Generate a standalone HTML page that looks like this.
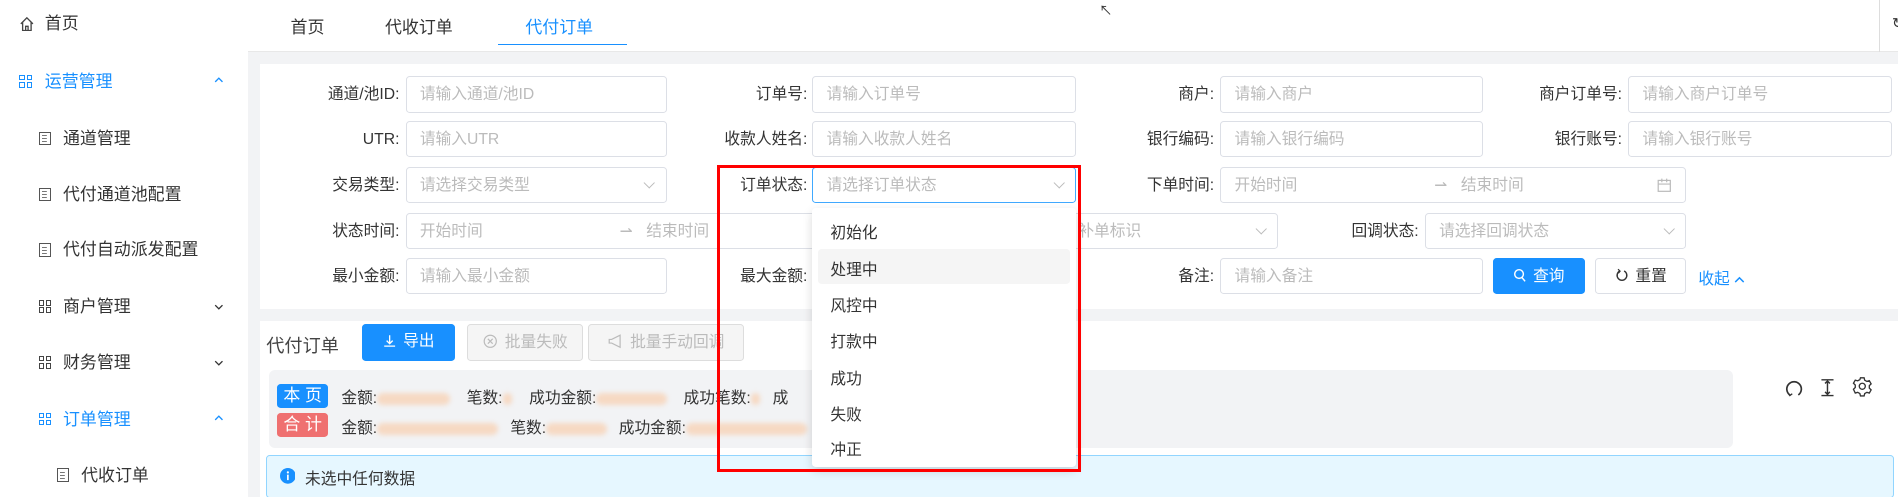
<!DOCTYPE html>
<html><head><meta charset="utf-8"><style>
*{box-sizing:border-box;margin:0;padding:0}
html,body{width:1898px;height:497px;overflow:hidden;background:#fff}
#w{zoom:1.2105;position:relative;width:1568px;height:411px;font-family:"Liberation Sans","Noto Sans CJK SC",sans-serif;font-size:13px;color:#333;overflow:hidden}
.a{position:absolute;white-space:nowrap}
.side{left:0;top:0;width:205px;height:411px;background:#fff}
.si{position:absolute;font-size:14px;color:#333;line-height:20px}
.blue{color:#1890ff}
.ico{display:inline-block;width:10px;height:11px;border:1.3px solid #555;position:absolute;background:linear-gradient(#777,#777) 2px 2px/4px 1px no-repeat,linear-gradient(#777,#777) 2px 4.5px/4px 1px no-repeat,linear-gradient(#777,#777) 2px 7px/4px 1px no-repeat}
.grid{position:absolute;width:11px;height:11px}
.grid i{position:absolute;width:4.5px;height:4.5px;border:1.2px solid currentColor}
.lbl{position:absolute;text-align:right;width:120px;line-height:32px;color:#333}
.inp{position:absolute;height:30px;border:1px solid #dcdfe6;border-radius:3px;background:#fff;color:#bbb;line-height:30px;padding-left:11px}
.chev{position:absolute;right:10px;top:9px;width:7px;height:7px;border-right:1px solid #bbb;border-bottom:1px solid #bbb;transform:rotate(45deg)}
.btn{position:absolute;height:30px;border-radius:3px;line-height:29px;text-align:center}
.blur{display:inline-block;height:10px;background:#f6d9c3;border-radius:5px;filter:blur(2px);vertical-align:middle}
.dd{position:absolute;font-size:13px;color:#333;left:686px}
</style></head><body><div id="w">
<div class="a" style="left:205px;top:0;width:1363px;height:411px;background:#f2f3f5"></div>
<div class="a" style="left:205px;top:0;width:1363px;height:43px;background:#fff;border-bottom:1px solid #e8e8e8"></div>
<div class="a" style="left:240px;top:11px;font-size:14px">首页</div>
<div class="a" style="left:318px;top:11px;font-size:14px">代收订单</div>
<div class="a blue" style="left:434px;top:11px;font-size:14px">代付订单</div>
<div class="a" style="left:411px;top:36px;width:107px;height:1.5px;background:#1890ff"></div>
<div class="a" style="left:908px;top:0;font-size:11px;color:#333">↖</div>
<div class="a" style="left:1552px;top:0;width:1px;height:43px;background:#ddd"></div>
<div class="a" style="left:1563px;top:13px;font-size:12px;color:#333">↻</div>

<div class="a side"></div>
<svg class="a" style="left:16px;top:13px" width="13" height="13" viewBox="0 0 13 13"><path d="M1.5 6.5L6.5 1.5L11.5 6.5M3 5v7h7V5M5.5 12V8.5h2V12" fill="none" stroke="#444" stroke-width="1.1"/></svg>
<div class="si" style="left:37px;top:10px">首页</div>
<div class="grid blue" style="left:16px;top:62px"><i style="left:0;top:0"></i><i style="left:6px;top:0"></i><i style="left:0;top:6px"></i><i style="left:6px;top:6px"></i></div>
<div class="si blue" style="left:37px;top:58px">运营管理</div>
<svg class="a" style="left:177px;top:64px" width="8" height="5"><path d="M1 4L4 1L7 4" fill="none" stroke="#1890ff" stroke-width="1.1"/></svg>
<div class="ico" style="left:32px;top:109px"></div><div class="si" style="left:52px;top:105px">通道管理</div>
<div class="ico" style="left:32px;top:155px"></div><div class="si" style="left:52px;top:151px">代付通道池配置</div>
<div class="ico" style="left:32px;top:201px"></div><div class="si" style="left:52px;top:197px">代付自动派发配置</div>
<div class="grid" style="left:32px;top:248px;color:#444"><i style="left:0;top:0"></i><i style="left:6px;top:0"></i><i style="left:0;top:6px"></i><i style="left:6px;top:6px"></i></div>
<div class="si" style="left:52px;top:244px">商户管理</div>
<svg class="a" style="left:177px;top:251px" width="8" height="5"><path d="M1 1L4 4L7 1" fill="none" stroke="#333" stroke-width="1.1"/></svg>
<div class="grid" style="left:32px;top:294px;color:#444"><i style="left:0;top:0"></i><i style="left:6px;top:0"></i><i style="left:0;top:6px"></i><i style="left:6px;top:6px"></i></div>
<div class="si" style="left:52px;top:290px">财务管理</div>
<svg class="a" style="left:177px;top:297px" width="8" height="5"><path d="M1 1L4 4L7 1" fill="none" stroke="#333" stroke-width="1.1"/></svg>
<div class="grid blue" style="left:32px;top:341px"><i style="left:0;top:0"></i><i style="left:6px;top:0"></i><i style="left:0;top:6px"></i><i style="left:6px;top:6px"></i></div>
<div class="si blue" style="left:52px;top:337px">订单管理</div>
<svg class="a" style="left:177px;top:343px" width="8" height="5"><path d="M1 4L4 1L7 4" fill="none" stroke="#1890ff" stroke-width="1.1"/></svg>
<div class="ico" style="left:47px;top:387px"></div><div class="si" style="left:67px;top:383px">代收订单</div>

<!-- filter panel -->
<div class="a" style="left:215px;top:53px;width:1353px;height:202px;background:#fff"></div>
<div class="lbl" style="left:210px;top:63px">通道/池ID:</div><div class="inp" style="left:335px;top:63px;width:216px">请输入通道/池ID</div>
<div class="lbl" style="left:547px;top:63px">订单号:</div><div class="inp" style="left:671px;top:63px;width:218px">请输入订单号</div>
<div class="lbl" style="left:883px;top:63px">商户:</div><div class="inp" style="left:1008px;top:63px;width:217px">请输入商户</div>
<div class="lbl" style="left:1220px;top:63px">商户订单号:</div><div class="inp" style="left:1345px;top:63px;width:218px">请输入商户订单号</div>

<div class="lbl" style="left:210px;top:100px">UTR:</div><div class="inp" style="left:335px;top:100px;width:216px">请输入UTR</div>
<div class="lbl" style="left:547px;top:100px">收款人姓名:</div><div class="inp" style="left:671px;top:100px;width:218px">请输入收款人姓名</div>
<div class="lbl" style="left:883px;top:100px">银行编码:</div><div class="inp" style="left:1008px;top:100px;width:217px">请输入银行编码</div>
<div class="lbl" style="left:1220px;top:100px">银行账号:</div><div class="inp" style="left:1345px;top:100px;width:218px">请输入银行账号</div>

<div class="lbl" style="left:210px;top:138px">交易类型:</div><div class="inp" style="left:335px;top:138px;width:216px">请选择交易类型<span class="chev"></span></div>
<div class="lbl" style="left:547px;top:138px">订单状态:</div><div class="inp" style="left:671px;top:138px;width:218px;border-color:#40a9ff">请选择订单状态<span class="chev"></span></div>
<div class="lbl" style="left:883px;top:138px">下单时间:</div><div class="inp" style="left:1008px;top:138px;width:385px">开始时间<span class="a" style="left:176px;top:0">⇀</span><span class="a" style="left:198px;top:0">结束时间</span>
<svg class="a" style="left:360px;top:8px" width="12" height="12"><rect x="1" y="2" width="10" height="9" fill="none" stroke="#bbb"/><path d="M1 5h10M4 0.5v3M8 0.5v3" stroke="#bbb"/></svg></div>

<div class="lbl" style="left:210px;top:176px">状态时间:</div><div class="inp" style="left:335px;top:176px;width:385px">开始时间<span class="a" style="left:176px;top:0">⇀</span><span class="a" style="left:198px;top:0">结束时间</span></div>
<div class="inp" style="left:840px;top:176px;width:216px;padding-left:50px">补单标识<span class="chev"></span></div>
<div class="lbl" style="left:1052px;top:176px">回调状态:</div><div class="inp" style="left:1177px;top:176px;width:216px">请选择回调状态<span class="chev"></span></div>

<div class="lbl" style="left:210px;top:213px">最小金额:</div><div class="inp" style="left:335px;top:213px;width:216px">请输入最小金额</div>
<div class="lbl" style="left:547px;top:213px">最大金额:</div>
<div class="lbl" style="left:883px;top:213px">备注:</div><div class="inp" style="left:1008px;top:213px;width:217px">请输入备注</div>
<div class="btn" style="left:1233px;top:213px;width:76px;background:#1890ff;color:#fff;border:1px solid #1890ff"><svg width="11" height="12" style="vertical-align:-1px;margin-right:6px"><circle cx="5" cy="5" r="3.6" fill="none" stroke="#fff" stroke-width="1.2"/><path d="M7.5 8L10 11" stroke="#fff" stroke-width="1.2"/></svg>查询</div>
<div class="btn" style="left:1318px;top:213px;width:75px;border:1px solid #dcdfe6;color:#333"><svg width="11" height="12" style="vertical-align:-1px;margin-right:6px"><path d="M4 2.5A4 4 0 1 0 7.5 2.5" fill="none" stroke="#333" stroke-width="1.2"/><path d="M2.5 1L4.2 2.6L2.8 4.3" fill="none" stroke="#333" stroke-width="1"/></svg>重置</div>
<div class="a blue" style="left:1403px;top:220px">收起 <svg width="9" height="6" style="vertical-align:1px"><path d="M1 5L4.5 1.5L8 5" fill="none" stroke="#1890ff" stroke-width="1.2"/></svg></div>

<!-- table panel -->
<div class="a" style="left:215px;top:265px;width:1353px;height:146px;background:#fff"></div>
<div class="a" style="left:220px;top:274px;font-size:15px;color:#444">代付订单</div>
<div class="btn" style="left:299px;top:268px;width:77px;background:#1890ff;color:#fff"><svg width="11" height="11" style="vertical-align:-1px;margin-right:6px"><path d="M5.5 1v7M3 5.5L5.5 8L8 5.5M1 10h9" fill="none" stroke="#fff" stroke-width="1.1"/></svg>导出</div>
<div class="btn" style="left:386px;top:268px;width:96px;border:1px solid #ddd;background:#f5f5f5;color:#bbb"><svg width="12" height="12" style="vertical-align:-1px;margin-right:6px"><circle cx="6" cy="6" r="5" fill="none" stroke="#bbb"/><path d="M4 4l4 4M8 4l-4 4" stroke="#bbb"/></svg>批量失败</div>
<div class="btn" style="left:486px;top:268px;width:129px;border:1px solid #ddd;background:#f5f5f5;color:#bbb"><svg width="12" height="12" style="vertical-align:-1px;margin-right:6px"><path d="M10 1L3 4.5H1v3h2L10 11z" fill="none" stroke="#bbb"/></svg>批量手动回调</div>
<div class="a" style="left:222px;top:306px;width:1210px;height:64px;background:#f2f3f5;border-radius:5px"></div>
<div class="a" style="left:229px;top:317px;width:42px;height:20px;background:#1890ff;color:#fff;border-radius:3px;text-align:center;line-height:20px;font-size:14px">本 页</div>
<div class="a" style="left:229px;top:341px;width:42px;height:20px;background:#ef7070;color:#fff;border-radius:3px;text-align:center;line-height:20px;font-size:14px">合 计</div>
<div class="a" style="left:282px;top:318px">金额:<span class="blur" style="width:60px"></span><span style="margin-left:14px">笔数:</span><span class="blur" style="width:8px"></span><span style="margin-left:14px">成功金额:</span><span class="blur" style="width:58px"></span><span style="margin-left:14px">成功笔数:</span><span class="blur" style="width:8px"></span><span style="margin-left:10px">成</span></div>
<div class="a" style="left:282px;top:343px">金额:<span class="blur" style="width:100px"></span><span style="margin-left:10px">笔数:</span><span class="blur" style="width:50px"></span><span style="margin-left:10px">成功金额:</span><span class="blur" style="width:100px"></span></div>
<svg class="a" style="left:1475px;top:312px" width="15" height="16"><path d="M4 14A6 6 0 1 1 11 14" fill="none" stroke="#333" stroke-width="1.4"/><path d="M2.5 12.5L4 14.5L6 13" fill="none" stroke="#333" stroke-width="1.1"/></svg>
<svg class="a" style="left:1503px;top:312px" width="14" height="16"><path d="M2 1.5h10M2 14.5h10M7 2v12M5 4.5L7 2.5L9 4.5M5 11.5L7 13.5L9 11.5" fill="none" stroke="#333" stroke-width="1.2"/></svg>
<svg class="a" style="left:1530px;top:311px" width="17" height="17" viewBox="0 0 17 17"><path d="M7 1.5h3l.5 2 1.8 1 2-.6 1.5 2.6-1.5 1.5v2l1.5 1.5-1.5 2.6-2-.6-1.8 1-.5 2H7l-.5-2-1.8-1-2 .6L1.2 11l1.5-1.5v-2L1.2 6l1.5-2.6 2 .6 1.8-1z" fill="none" stroke="#333" stroke-width="1.1"/><circle cx="8.5" cy="8.5" r="2.5" fill="none" stroke="#333" stroke-width="1.1"/></svg>
<div class="a" style="left:220px;top:376px;width:1345px;height:35px;background:#e6f7ff;border:1px solid #91d5ff;border-radius:3px"></div>
<svg class="a" style="left:231px;top:387px" width="13" height="13"><circle cx="6.5" cy="6.5" r="6.5" fill="#1890ff"/><path d="M6.5 5.5v4.5" stroke="#fff" stroke-width="1.4"/><circle cx="6.5" cy="3.6" r=".9" fill="#fff"/></svg>
<div class="a" style="left:252px;top:385px">未选中任何数据</div>

<!-- dropdown -->
<div class="a" style="left:671px;top:172px;width:218px;height:214px;background:#fff;box-shadow:0 3px 8px rgba(0,0,0,.15);border-radius:3px"></div>
<div class="a" style="left:676px;top:206px;width:208px;height:29px;background:#f5f5f5;border-radius:3px"></div>
<div class="dd" style="top:182px">初始化</div>
<div class="dd" style="top:212px">处理中</div>
<div class="dd" style="top:242px">风控中</div>
<div class="dd" style="top:272px">打款中</div>
<div class="dd" style="top:302px">成功</div>
<div class="dd" style="top:332px">失败</div>
<div class="dd" style="top:361px">冲正</div>
<div class="a" style="left:592px;top:136px;width:301px;height:254px;border:3px solid #f00"></div>
</div></body></html>
